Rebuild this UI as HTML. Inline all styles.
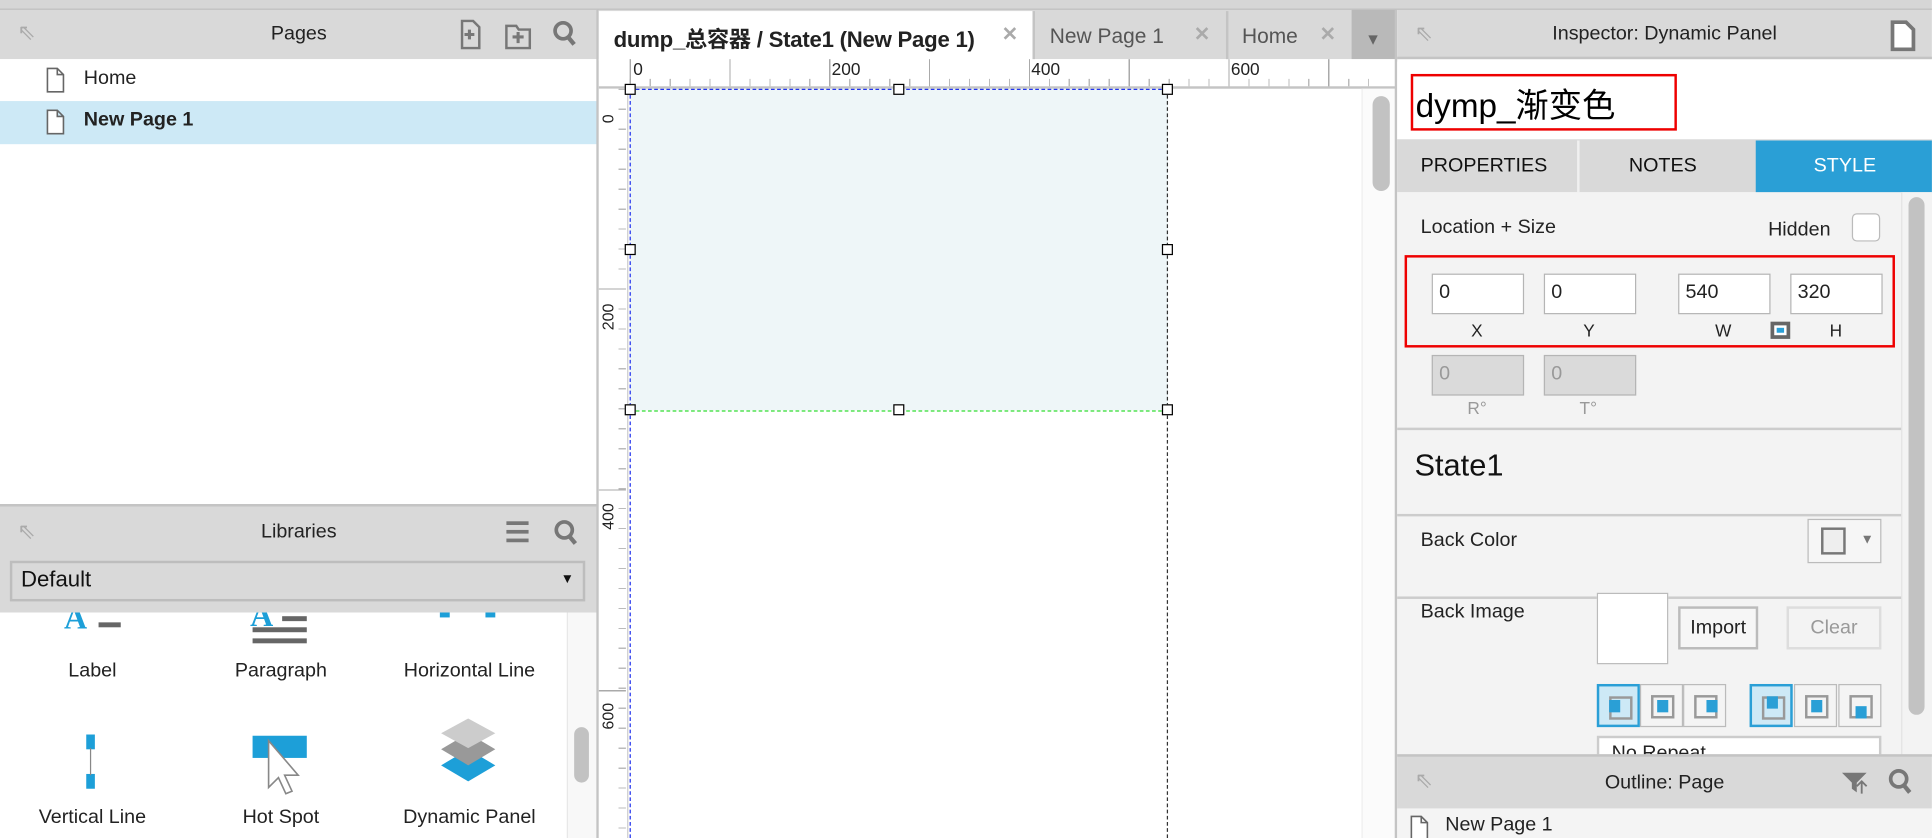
<!DOCTYPE html>
<html><head><meta charset="utf-8"><style>
*{box-sizing:border-box;margin:0;padding:0}
body{width:1932px;height:838px;overflow:hidden;background:#fff;font-family:"Liberation Sans","Noto Sans CJK SC",sans-serif;color:#222}
#s{position:absolute;left:0;top:0;width:1568px;height:680px;transform:scale(1.2321,1.2324);transform-origin:0 0;overflow:hidden}
.a{position:absolute}
.hdr{background:#d9d9d9;font-size:16px;text-align:center;line-height:40px;color:#222}
.t{position:absolute;font-size:16px;white-space:nowrap}
.inp{position:absolute;background:#fff;border:1px solid #b5b5b5;font-size:16px;padding-left:5px;line-height:30px}
.h{position:absolute;width:9px;height:9px;border:1px solid #000;background:#fff}
.ab{position:absolute;width:35px;height:35px;border:1px solid #bbb;background:#f4f4f4}
.ab i{position:absolute;left:8px;top:8px;width:19px;height:19px;border:2px solid #999}
.ab b{position:absolute;background:#2a9fd6;width:9px;height:10px}
</style></head><body><div id="s">
<div class="a" style="left:0;top:0;width:1568px;height:8px;background:#d6d6d6;border-bottom:1px solid #bdbdbd"></div>

<div class="a hdr" style="left:0;top:8px;width:485px;height:40px">Pages</div>
<div class="t" style="left:14px;top:16px;color:#aaa;font-size:18px">⇖</div>
<svg class="a" style="left:368px;top:15px" width="110" height="26"><g fill="none" stroke="#777" stroke-width="2"><path d="M7 2h9l5 5v17H7z"/><path d="M9 13h8M13 9v8" stroke-width="2.5"/><path d="M43 6h8l2 3h9v15H43z"/><path d="M48 15h9M52.5 11v9" stroke-width="2.5"/><circle cx="89" cy="10" r="6.5" stroke-width="3"/><path d="M93 15l5 6" stroke-width="3.5"/></g></svg>
<div class="a" style="left:0;top:48px;width:485px;height:34px;background:#fff"></div>
<svg class="a" style="left:37px;top:54px" width="16" height="22"><path d="M1.5 1.5h8l5 5v14h-13z M9.5 1.5v5h5" fill="#fff" stroke="#666" stroke-width="1.3"/></svg>
<div class="t" style="left:68px;top:55px">Home</div>
<div class="a" style="left:0;top:82px;width:485px;height:35px;background:#cde9f6"></div>
<svg class="a" style="left:37px;top:88px" width="16" height="22"><path d="M1.5 1.5h8l5 5v14h-13z M9.5 1.5v5h5" fill="#fff" stroke="#666" stroke-width="1.3"/></svg>
<div class="t" style="left:68px;top:89px;font-weight:bold">New Page 1</div>

<div class="a" style="left:0;top:409px;width:485px;height:88px;background:#d9d9d9;border-top:2px solid #c4c4c4"></div>
<div class="a hdr" style="left:0;top:412px;width:485px;height:40px;line-height:40px">Libraries</div>
<div class="t" style="left:14px;top:421px;color:#aaa;font-size:18px">⇖</div>
<svg class="a" style="left:408px;top:420px" width="65" height="26"><g fill="#777"><rect x="3" y="3" width="18" height="3"/><rect x="3" y="10" width="18" height="3"/><rect x="3" y="17" width="18" height="3"/></g><g fill="none" stroke="#777"><circle cx="50" cy="10" r="6.5" stroke-width="3"/><path d="M54 15l5 6" stroke-width="3.5"/></g></svg>
<div class="a" style="left:8px;top:455px;width:467px;height:33px;border:2px solid #bdbdbd;background:#d9d9d9"></div>
<div class="t" style="left:17px;top:460px;font-size:18px;color:#111">Default</div>
<div class="t" style="left:455px;top:464px;font-size:11px;color:#111">▼</div>

<div class="a" style="left:460px;top:497px;width:25px;height:183px;background:#f8f8f8;border-left:1px solid #e8e8e8"></div>
<div class="a" style="left:466px;top:590px;width:12px;height:45px;background:#c2c2c2;border-radius:6px"></div>
<svg class="a" style="left:0;top:497px" width="460" height="183">
<text x="52" y="13" font-family="Liberation Serif" font-weight="bold" font-size="26" fill="#1d9fd8">A</text><rect x="80" y="8" width="18" height="4" fill="#666"/>
<text x="203" y="11" font-family="Liberation Serif" font-weight="bold" font-size="26" fill="#1d9fd8">A</text><rect x="229" y="3" width="20" height="4" fill="#666"/><rect x="205" y="12" width="44" height="4" fill="#666"/><rect x="205" y="21" width="44" height="4" fill="#666"/>
<rect x="357" y="0" width="8" height="4" fill="#1d9fd8"/><rect x="394" y="0" width="8" height="4" fill="#1d9fd8"/>
<rect x="70" y="99" width="7" height="12" fill="#1d9fd8"/><rect x="70" y="131" width="7" height="12" fill="#1d9fd8"/><rect x="73" y="110" width="1" height="22" fill="#888"/>
<rect x="205" y="100" width="44" height="18" fill="#1d9fd8"/><path d="M218 104v38l8-8 6 13 5-2-6-13h11z" fill="#fff" stroke="#888" stroke-width="1.3"/>
<path d="M380 137l-22-13 22-13 22 13z" fill="#1d9fd8"/><path d="M380 124l-22-13 22-13 22 13z" fill="#999"/><path d="M380 110l-22-12 22-12 22 12z" fill="#ccc"/>
<g font-family="Liberation Sans" font-size="16" fill="#222" text-anchor="middle"><text x="75" y="52">Label</text><text x="228" y="52">Paragraph</text><text x="381" y="52">Horizontal Line</text><text x="75" y="171">Vertical Line</text><text x="228" y="171">Hot Spot</text><text x="381" y="171">Dynamic Panel</text></g>
</svg>
<div class="a" style="left:484px;top:8px;width:2px;height:672px;background:#c4c4c4"></div>

<div class="a" style="left:486px;top:8px;width:647px;height:40px;background:#d9d9d9"></div>
<div class="a" style="left:486px;top:9px;width:352px;height:40px;background:#fff"></div>
<div class="t" style="left:498px;top:18px;font-weight:bold;font-size:18px;color:#222;letter-spacing:-0.2px">dump_总容器 / State1 (New Page 1)</div>
<div class="t" style="left:813px;top:18px;color:#aaa;font-weight:bold">✕</div>
<div class="a" style="left:838px;top:9px;width:2px;height:40px;background:#c4c4c4"></div>
<div class="t" style="left:852px;top:20px;color:#555;font-size:17px">New Page 1</div>
<div class="t" style="left:969px;top:18px;color:#aaa;font-weight:bold">✕</div>
<div class="a" style="left:995px;top:9px;width:2px;height:40px;background:#c4c4c4"></div>
<div class="t" style="left:1008px;top:20px;color:#555;font-size:17px">Home</div>
<div class="t" style="left:1071px;top:18px;color:#aaa;font-weight:bold">✕</div>
<div class="a" style="left:1097px;top:8px;width:36px;height:40px;background:#b9b9b9"></div>
<div class="t" style="left:1108px;top:24px;color:#666;font-size:13px">▼</div>

<div class="a" style="left:486px;top:48px;width:647px;height:24px;background:#fff;border-bottom:2px solid #c4c4c4"></div>
<div class="a" style="left:511px;top:64px;width:600px;height:6px;background:repeating-linear-gradient(90deg,#bbb 0 1px,transparent 1px 16.2px)"></div>
<div class="a" style="left:511px;top:48px;width:600px;height:22px;background:repeating-linear-gradient(90deg,#aaa 0 1px,transparent 1px 81px)"></div>
<div class="t" style="left:514px;top:48px;font-size:14px">0</div>
<div class="t" style="left:675px;top:48px;font-size:14px">200</div>
<div class="t" style="left:837px;top:48px;font-size:14px">400</div>
<div class="t" style="left:999px;top:48px;font-size:14px">600</div>
<div class="a" style="left:486px;top:72px;width:24px;height:608px;background:#fff;border-right:1px solid #ccc"></div>
<div class="a" style="left:502px;top:72px;width:6px;height:608px;background:repeating-linear-gradient(180deg,#bbb 0 1px,transparent 1px 16.2px)"></div>
<div class="a" style="left:486px;top:72px;width:22px;height:608px;background:repeating-linear-gradient(180deg,transparent 0 162px,#aaa 162px 163px)"></div>
<div class="t" style="left:484px;top:82px;font-size:13px;transform:rotate(-90deg);transform-origin:10px 8px">0</div>
<div class="t" style="left:484px;top:250px;font-size:13px;transform:rotate(-90deg);transform-origin:10px 8px">200</div>
<div class="t" style="left:484px;top:412px;font-size:13px;transform:rotate(-90deg);transform-origin:10px 8px">400</div>
<div class="t" style="left:484px;top:574px;font-size:13px;transform:rotate(-90deg);transform-origin:10px 8px">600</div>

<div class="a" style="left:511px;top:72px;width:437px;height:261px;background:#eef6f8"></div>
<div class="a" style="left:511px;top:72px;width:0;height:608px;border-left:1px dashed #2233ee"></div>
<div class="a" style="left:511px;top:72px;width:437px;height:0;border-top:1px dashed #2233ee"></div>
<div class="a" style="left:947px;top:72px;width:0;height:608px;border-left:1px dashed #333"></div>
<div class="a" style="left:511px;top:333px;width:437px;height:0;border-top:1px dashed #3d3"></div>
<div class="h" style="left:507px;top:68px"></div><div class="h" style="left:725px;top:68px"></div><div class="h" style="left:943px;top:68px"></div>
<div class="h" style="left:507px;top:198px"></div><div class="h" style="left:943px;top:198px"></div>
<div class="h" style="left:507px;top:328px"></div><div class="h" style="left:725px;top:328px"></div><div class="h" style="left:943px;top:328px"></div>
<div class="a" style="left:1105px;top:72px;width:28px;height:608px;background:#fbfbfb;border-left:1px solid #eee"></div>
<div class="a" style="left:1114px;top:78px;width:14px;height:77px;background:#c2c2c2;border-radius:7px"></div>
<div class="a" style="left:1132px;top:8px;width:2px;height:672px;background:#c4c4c4"></div>

<div class="a hdr" style="left:1134px;top:8px;width:434px;height:40px;border-bottom:2px solid #c4c4c4">Inspector: Dynamic Panel</div>
<div class="t" style="left:1148px;top:17px;color:#aaa;font-size:18px">⇖</div>
<svg class="a" style="left:1534px;top:16px" width="22" height="26"><path d="M2 2h11l6 6v16H2z" fill="#fff" stroke="#777" stroke-width="3"/></svg>
<div class="a" style="left:1134px;top:50px;width:434px;height:63px;background:#fff"></div>
<div class="a" style="left:1145px;top:60px;width:216px;height:46px;border:2px solid #e00"></div>
<div class="t" style="left:1149px;top:64px;font-size:27px;color:#000">dymp_渐变色</div>
<div class="a" style="left:1134px;top:113px;width:434px;height:43px;background:#d9d9d9"></div>
<div class="a" style="left:1280px;top:114px;width:2px;height:42px;background:#f0f0f0"></div>
<div class="a" style="left:1425px;top:114px;width:143px;height:42px;background:#2a9fd6"></div>
<div class="t" style="left:1153px;top:126px;font-size:16px;color:#111">PROPERTIES</div>
<div class="t" style="left:1322px;top:126px;font-size:16px;color:#111">NOTES</div>
<div class="t" style="left:1472px;top:126px;font-size:16px;color:#fff">STYLE</div>
<div class="a" style="left:1134px;top:156px;width:434px;height:458px;background:#f3f3f3"></div>
<div class="a" style="left:1543px;top:156px;width:25px;height:458px;background:#f3f3f3;border-left:1px solid #e3e3e3"></div>
<div class="a" style="left:1549px;top:160px;width:13px;height:420px;background:#c2c2c2;border-radius:7px"></div>
<div class="t" style="left:1153px;top:176px">Location + Size</div>
<div class="t" style="left:1435px;top:178px">Hidden</div>
<div class="a" style="left:1503px;top:173px;width:23px;height:23px;background:#fff;border:1px solid #bbb;border-radius:4px"></div>
<div class="a" style="left:1140px;top:207px;width:398px;height:75px;border:2px solid #e00"></div>
<div class="inp" style="left:1162px;top:222px;width:75px;height:33px">0</div>
<div class="inp" style="left:1253px;top:222px;width:75px;height:33px">0</div>
<div class="inp" style="left:1362px;top:222px;width:75px;height:33px">540</div>
<div class="inp" style="left:1453px;top:222px;width:75px;height:33px">320</div>
<div class="t" style="left:1194px;top:260px;font-size:14px">X</div>
<div class="t" style="left:1285px;top:260px;font-size:14px">Y</div>
<div class="t" style="left:1392px;top:260px;font-size:14px">W</div>
<div class="t" style="left:1485px;top:260px;font-size:14px">H</div>
<div class="a" style="left:1437px;top:261px;width:16px;height:14px;border:3px solid #666;background:#fff"><div class="a" style="left:2px;top:2px;width:6px;height:4px;background:#2a9fd6"></div></div>
<div class="inp" style="left:1162px;top:288px;width:75px;height:33px;background:#dadada;color:#999">0</div>
<div class="inp" style="left:1253px;top:288px;width:75px;height:33px;background:#dadada;color:#999">0</div>
<div class="t" style="left:1191px;top:323px;font-size:14px;color:#999">R°</div>
<div class="t" style="left:1282px;top:323px;font-size:14px;color:#999">T°</div>
<div class="a" style="left:1134px;top:347px;width:409px;height:2px;background:#ccc"></div>
<div class="t" style="left:1148px;top:364px;font-size:25px;color:#111">State1</div>
<div class="a" style="left:1134px;top:417px;width:409px;height:2px;background:#ccc"></div>
<div class="t" style="left:1153px;top:430px">Back Color</div>
<div class="a" style="left:1467px;top:421px;width:60px;height:36px;border:1px solid #bbb;background:#f6f6f6"></div>
<div class="a" style="left:1478px;top:428px;width:20px;height:22px;border:2px solid #777;background:#eee"></div>
<div class="t" style="left:1510px;top:432px;font-size:11px;color:#777">▼</div>
<div class="a" style="left:1134px;top:484px;width:409px;height:2px;background:#ccc"></div>
<div class="t" style="left:1153px;top:488px">Back Image</div>
<div class="a" style="left:1296px;top:481px;width:58px;height:58px;border:1px solid #bbb;background:#fff"></div>
<div class="a" style="left:1362px;top:492px;width:65px;height:35px;border:2px solid #bbb;background:#f6f6f6;font-size:16px;text-align:center;line-height:31px">Import</div>
<div class="a" style="left:1450px;top:492px;width:77px;height:35px;border:2px solid #ddd;background:#f3f3f3;font-size:16px;text-align:center;line-height:31px;color:#999">Clear</div>
<div class="ab" style="left:1296px;top:555px;background:#cde9f6;border:2px solid #2a9fd6"><i></i><b style="left:8px;top:11px"></b></div>
<div class="ab" style="left:1331px;top:555px"><i></i><b style="left:13px;top:12px"></b></div>
<div class="ab" style="left:1366px;top:555px"><i></i><b style="left:18px;top:12px"></b></div>
<div class="ab" style="left:1420px;top:555px;background:#cde9f6;border:2px solid #2a9fd6"><i></i><b style="left:12px;top:8px"></b></div>
<div class="ab" style="left:1456px;top:555px"><i></i><b style="left:13px;top:12px"></b></div>
<div class="ab" style="left:1492px;top:555px"><i></i><b style="left:13px;top:17px"></b></div>
<div class="a" style="left:1296px;top:597px;width:231px;height:30px;border:2px solid #ccc;background:#fff;font-size:16px;padding:4px 10px">No Repeat</div>
<div class="a hdr" style="left:1134px;top:612px;width:434px;height:44px;line-height:44px;border-top:2px solid #c4c4c4">Outline: Page</div>
<div class="t" style="left:1148px;top:623px;color:#aaa;font-size:18px">⇖</div>
<svg class="a" style="left:1492px;top:622px" width="70" height="26"><g fill="#777"><path d="M3 5h20l-8 8v8l-4-3v-5z"/></g><path d="M19 22v-10M15 16l4-4 4 4" stroke="#777" stroke-width="1.5" fill="none"/><g fill="none" stroke="#777"><circle cx="49" cy="10" r="6.5" stroke-width="3"/><path d="M53 15l5 6" stroke-width="3.5"/></g></svg>
<div class="a" style="left:1134px;top:656px;width:434px;height:24px;background:#f4f4f4"></div>
<svg class="a" style="left:1144px;top:661px" width="16" height="22"><path d="M1.5 1.5h8l5 5v14h-13z M9.5 1.5v5h5" fill="#fff" stroke="#666" stroke-width="1.3"/></svg>
<div class="t" style="left:1173px;top:661px">New Page 1</div>
</div></body></html>
